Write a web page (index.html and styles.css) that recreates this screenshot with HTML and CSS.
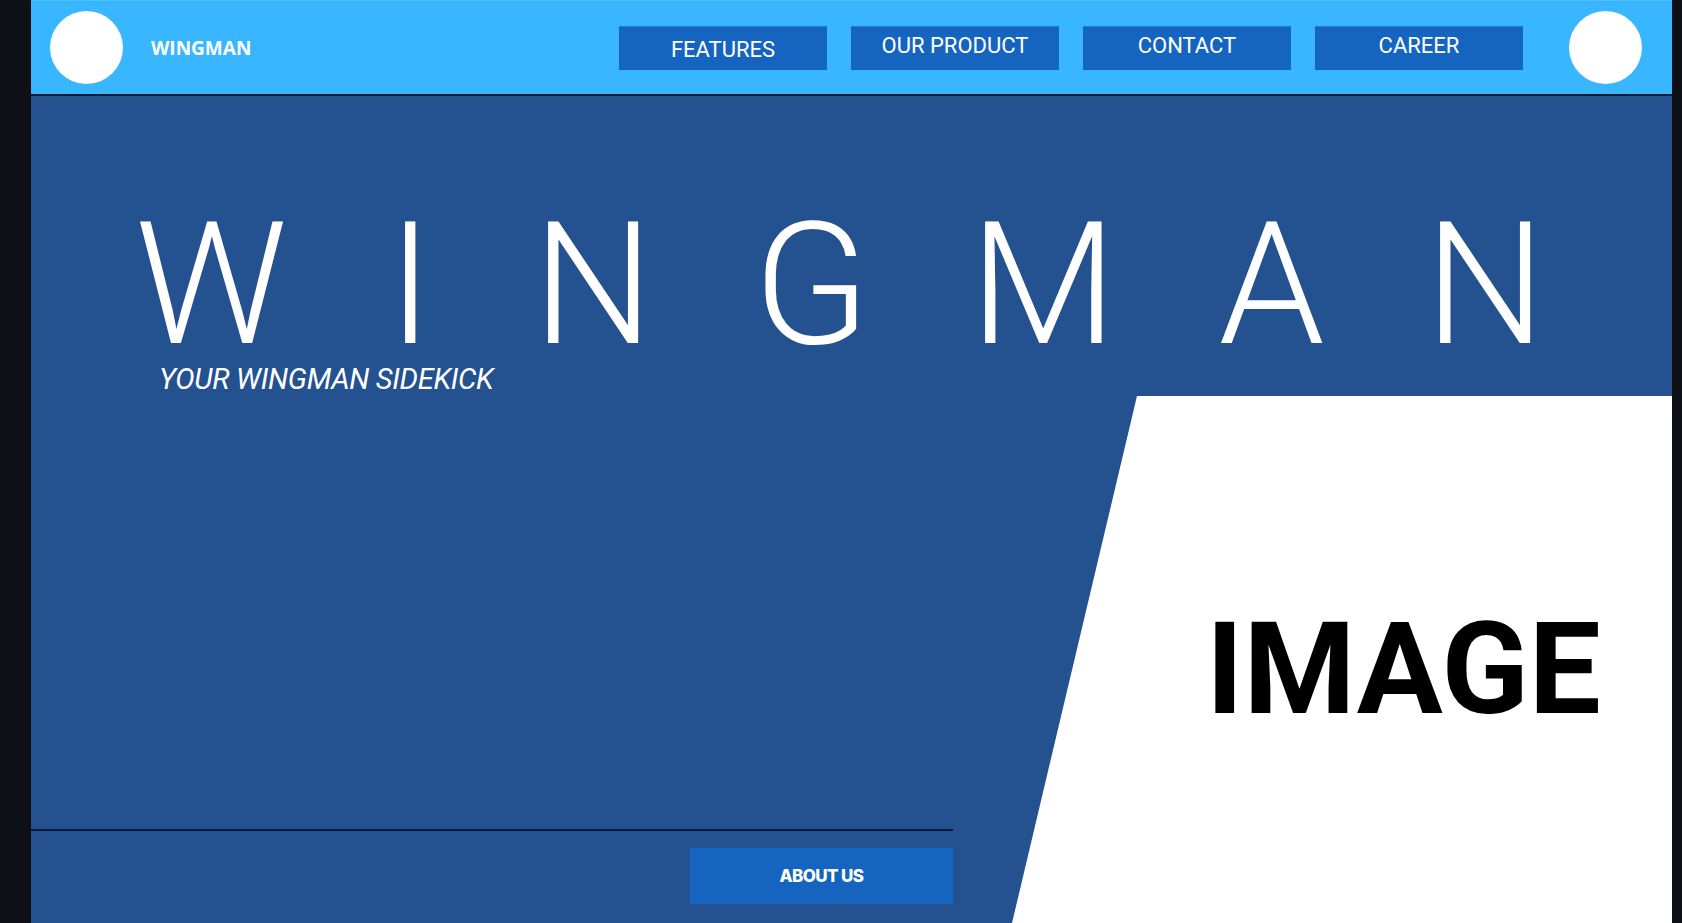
FILE: index.html
```html
<!DOCTYPE html>
<html lang="en">
<head>
<meta charset="utf-8">
<title>Wingman</title>
<link rel="stylesheet" href="styles.css">
</head>
<body>
<div class="frame">
  <header class="topbar">
    <div class="avatar"></div>
    <div class="brand">WINGMAN</div>
    <nav class="nav">
      <a class="nav-btn nav-btn--low" href="#">FEATURES</a>
      <a class="nav-btn" href="#">OUR PRODUCT</a>
      <a class="nav-btn" href="#">CONTACT</a>
      <a class="nav-btn" href="#">CAREER</a>
    </nav>
    <div class="avatar"></div>
  </header>
  <main class="hero">
    <h1 class="hero-title">WINGMAN</h1>
    <p class="hero-sub">YOUR WINGMAN SIDEKICK</p>
    <div class="hero-row">
      <div class="hero-left">
        <div class="divider"></div>
        <a class="about-btn" href="#">ABOUT US</a>
      </div>
      <div class="image-panel">
        <span class="image-label">IMAGE</span>
      </div>
    </div>
  </main>
</div>
</body>
</html>
```
FILE: styles.css
```css
html, body {
  margin: 0;
  padding: 0;
}
body {
  background: #0d1117;
  height: 923px;
  overflow: hidden;
  font-family: Roboto, "Liberation Sans", sans-serif;
}
.frame {
  margin-left: 31px;
  width: 1641px;
  height: 923px;
  display: flex;
  flex-direction: column;
}
.topbar {
  height: 93px;
  border-top: 1px solid #4dc0ff;
  border-bottom: 2px solid #0b1a30;
  background: #38b6ff;
  display: flex;
  align-items: center;
  padding: 0 30px 0 19px;
  box-sizing: content-box;
}
.avatar {
  width: 73px;
  height: 73px;
  border-radius: 50%;
  background: #ffffff;
  flex: none;
}
.brand {
  margin-left: 28px;
  font-family: "Open Sans", sans-serif;
  font-weight: 700;
  font-size: 19px;
  color: #ffffff;
}
.nav {
  margin-left: auto;
  margin-right: 46px;
  display: flex;
  gap: 24px;
}
.nav-btn {
  width: 208px;
  height: 44px;
  box-sizing: border-box;
  background: #1565c0;
  border-top: 1px solid #2a7ad4;
  color: #ffffff;
  text-decoration: none;
  font-family: Roboto, sans-serif;
  font-size: 22px;
  line-height: 1;
  display: flex;
  justify-content: center;
  align-items: flex-start;
  padding-top: 8px;
}
.nav-btn--low {
  padding-top: 12px;
}
.hero {
  flex: 1;
  background: #245190;
  display: flex;
  flex-direction: column;
}
.hero-title {
  margin: 121px 0 0;
  padding-left: 104px;
  font-family: Roboto, sans-serif;
  font-weight: 300;
  font-size: 170px;
  line-height: 0.8;
  letter-spacing: 100px;
  color: #ffffff;
  white-space: nowrap;
}
.hero-sub {
  margin: 12px 0 0;
  padding-left: 128px;
  font-family: Roboto, sans-serif;
  font-style: italic;
  font-size: 29px;
  line-height: 1;
  letter-spacing: -0.3px;
  color: #ffffff;
}
.hero-row {
  flex: 1;
  margin-top: 2px;
  display: flex;
}
.hero-left {
  width: 922px;
  flex: none;
  display: flex;
  flex-direction: column;
  justify-content: flex-end;
  padding-bottom: 19px;
}
.divider {
  height: 2px;
  background: #0a1a36;
  margin-bottom: 17px;
}
.about-btn {
  align-self: flex-end;
  width: 263px;
  height: 56px;
  background: #1565c0;
  color: #ffffff;
  text-decoration: none;
  font-family: Inter, sans-serif;
  font-weight: 800;
  font-size: 17px;
  letter-spacing: -0.6px;
  display: flex;
  align-items: center;
  justify-content: center;
}
.image-panel {
  flex: 1;
  margin-left: 59px;
  background: #ffffff;
  clip-path: polygon(125px 0, 100% 0, 100% 100%, 0 100%);
  display: flex;
  align-items: center;
  padding: 19px 0 0 194px;
}
.image-label {
  font-family: Roboto, sans-serif;
  font-weight: 700;
  font-size: 128px;
  line-height: 1;
  color: #000000;
}
```
